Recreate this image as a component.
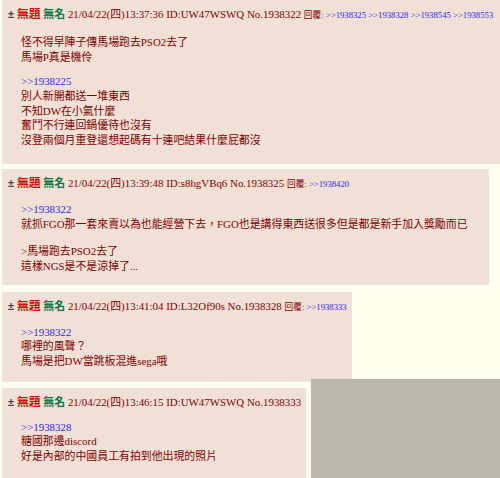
import React from "react";

const FONT = { fontFamily: '"Liberation Serif", "Noto Sans CJK TC", serif' };

function Link({ children }: { children: React.ReactNode }) {
  return <span className="text-[#2a2ae8]">{children}</span>;
}

function Header({
  date,
  id,
  no,
  replies,
}: {
  date: string;
  id: string;
  no: string;
  replies?: string[];
}) {
  return (
    <div className="whitespace-nowrap leading-[15px] text-[10.9px]">
      <span className="inline-block w-[9px] text-[11px] font-bold text-[#444] [font-family:'Liberation_Sans',sans-serif]">±</span>
      <span className="text-[11.8px] font-bold text-[#cc1105]">無題</span>{" "}
      <span className="font-bold text-[#117743]">無名</span>{" "}
      <span>{date} ID:{id} No.{no}</span>
      {replies && (
        <>
          {" "}
          <span className="text-[8.7px]">
            回覆:{" "}
            {replies.map((r, i) => (
              <React.Fragment key={r}>
                {i > 0 && " "}
                <Link>&gt;&gt;{r}</Link>
              </React.Fragment>
            ))}
          </span>
        </>
      )}
    </div>
  );
}

function Line({ children }: { children?: React.ReactNode }) {
  return <div className="h-[14.7px] leading-[14.7px] whitespace-nowrap">{children}</div>;
}

export default function App() {
  return (
    <div
      className="relative h-[478px] w-[500px] overflow-hidden bg-[#ffffee] text-[10.9px] text-[#800000]"
      style={FONT}
    >
      {/* Post 1 */}
      <div className="ml-[2px] w-[498px] bg-[#f0e0d6] pl-[6px] pt-[7px] pb-[16px]">
        <Header
          date="21/04/22(四)13:37:36"
          id="UW47WSWQ"
          no="1938322"
          replies={["1938325", "1938328", "1938545", "1938553"]}
        />
        <div className="ml-[13px] mt-[12px]">
          <Line>怪不得早陣子傳馬場跑去PSO2去了</Line>
          <Line>馬場P真是機伶</Line>
          <div className="h-[10px]" />
          <Line>
            <Link>&gt;&gt;1938225</Link>
          </Line>
          <Line>別人新開都送一堆東西</Line>
          <Line>不知DW在小氣什麼</Line>
          <Line>奮鬥不行連回鍋優待也沒有</Line>
          <Line>沒登兩個月重登還想起碼有十連吧結果什麼屁都沒</Line>
        </div>
      </div>

      {/* Post 2 */}
      <div className="ml-[2px] mt-[5px] w-[487px] bg-[#f0e0d6] pl-[6px] pt-[7px] pb-[11px]">
        <Header date="21/04/22(四)13:39:48" id="s8hgVBq6" no="1938325" replies={["1938420"]} />
        <div className="ml-[13px] mt-[10px]">
          <Line>
            <Link>&gt;&gt;1938322</Link>
          </Line>
          <Line>就抓FGO那一套來賣以為也能經營下去，FGO也是講得東西送很多但是都是新手加入獎勵而已</Line>
          <div className="h-[13px]" />
          <Line>&gt;馬場跑去PSO2去了</Line>
          <Line>這樣NGS是不是涼掉了...</Line>
        </div>
      </div>

      {/* Post 3 */}
      <div className="ml-[2px] mt-[7px] w-[350px] bg-[#f0e0d6] pl-[6px] pt-[7px] pb-[13px]">
        <Header date="21/04/22(四)13:41:04" id="L32Of90s" no="1938328" replies={["1938333"]} />
        <div className="ml-[13px] mt-[10px]">
          <Line>
            <Link>&gt;&gt;1938322</Link>
          </Line>
          <Line>哪裡的風聲？</Line>
          <Line>馬場是把DW當跳板混進sega哦</Line>
        </div>
      </div>

      {/* Post 4 */}
      <div className="ml-[2px] mt-[6px] w-[304px] bg-[#f0e0d6] pl-[6px] pt-[7px] pb-[14px]">
        <Header date="21/04/22(四)13:46:15" id="UW47WSWQ" no="1938333" />
        <div className="ml-[13px] mt-[10px]">
          <Line>
            <Link>&gt;&gt;1938328</Link>
          </Line>
          <Line>糖國那邊discord</Line>
          <Line>好是內部的中國員工有拍到他出現的照片</Line>
        </div>
      </div>

      {/* overlay gray panel */}
      <div className="absolute left-[311px] top-[379px] h-[99px] w-[189px] bg-[#bab8a9]" />
    </div>
  );
}
